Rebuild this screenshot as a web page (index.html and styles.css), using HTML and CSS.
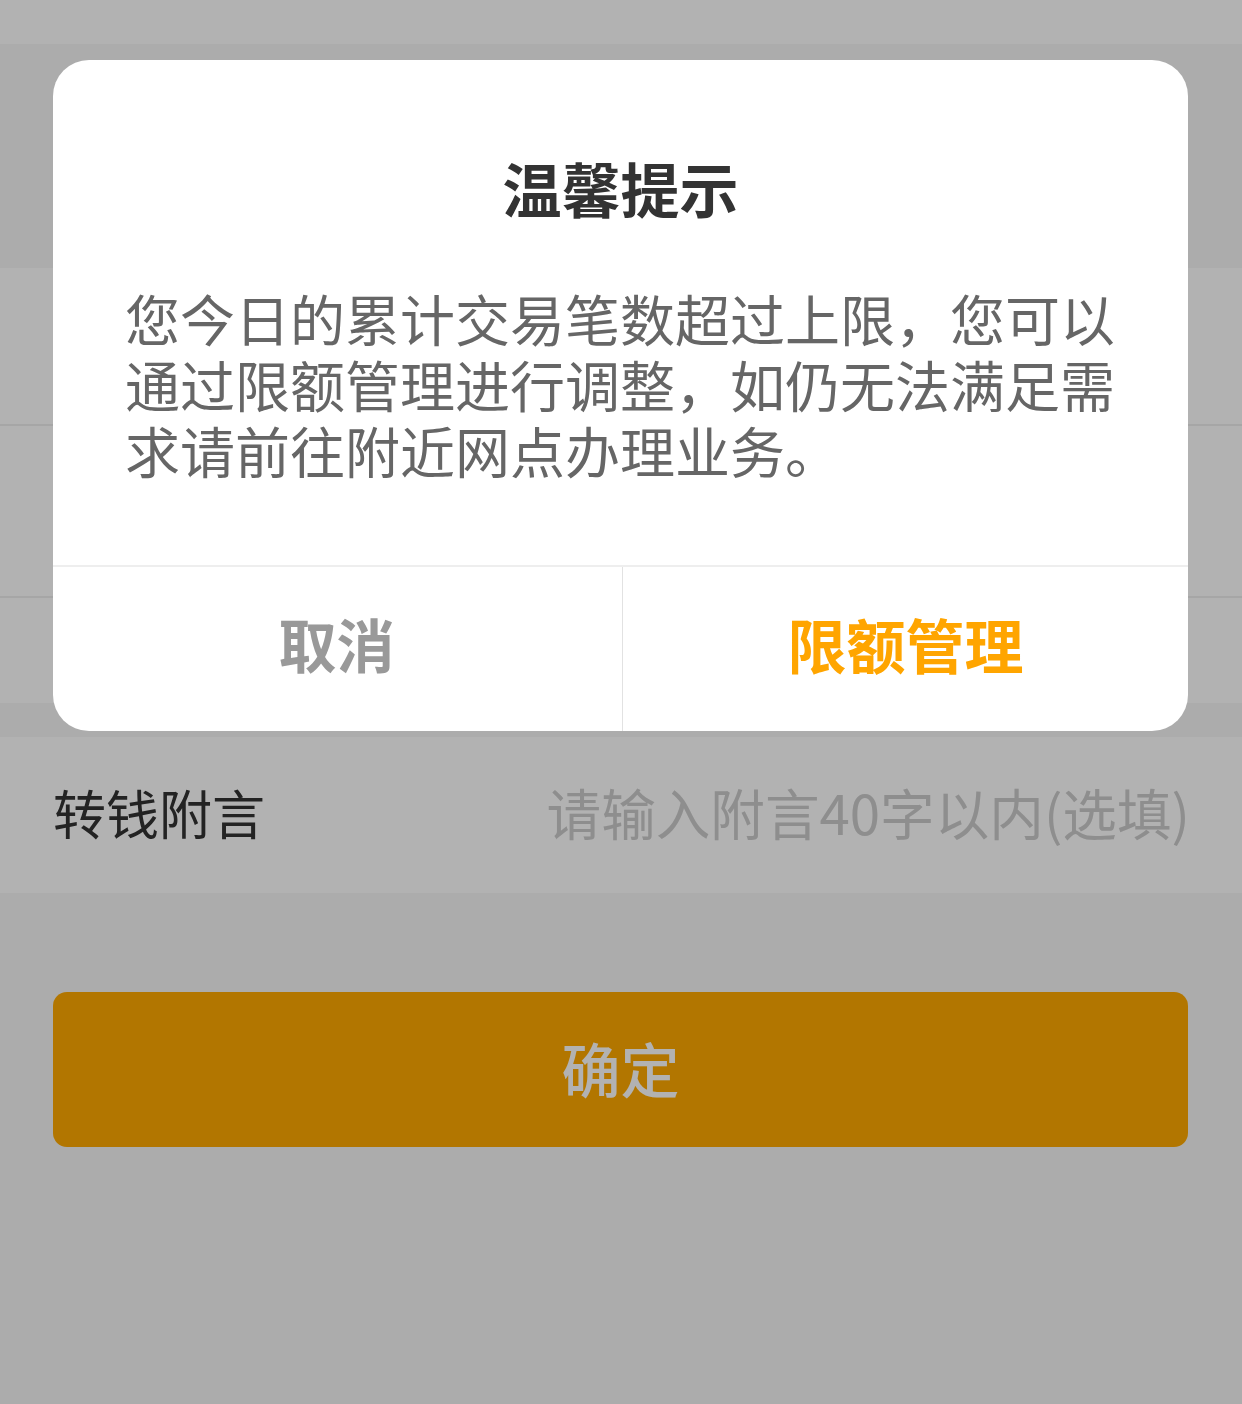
FILE: index.html
```html
<!DOCTYPE html>
<html lang="zh-CN">
<head>
<meta charset="utf-8">
<title>转账</title>
<link rel="stylesheet" href="styles.css">
</head>
<body>
<div class="page">
  <div class="topbar"></div>
  <div class="gap gap-top"></div>
  <div class="group">
    <div class="row row-a"></div>
    <div class="row row-b"></div>
    <div class="row row-c"></div>
  </div>
  <div class="gap gap-mid"></div>
  <div class="group">
    <div class="row row-note">
      <span class="label">转钱附言</span>
      <span class="placeholder">请输入附言40字以内(选填)</span>
    </div>
  </div>
  <div class="actions">
    <div class="confirm">确定</div>
  </div>
</div>

<div class="mask"></div>

<div class="dialog">
  <div class="dialog-body">
    <div class="dialog-title">温馨提示</div>
    <div class="dialog-text">您今日的累计交易笔数超过上限，您可以通过限额管理进行调整，如仍无法满足需求请前往附近网点办理业务。</div>
  </div>
  <div class="dialog-footer">
    <div class="btn btn-cancel">取消</div>
    <div class="btn btn-ok">限额管理</div>
  </div>
</div>
</body>
</html>
```

FILE: styles.css
```css
* {
  box-sizing: border-box;
}

html, body {
  margin: 0;
  padding: 0;
}

body {
  width: 1242px;
  height: 1404px;
  overflow: hidden;
  background: #f7f7f7;
  font-family: "Noto Sans CJK SC", "Noto Sans", sans-serif;
}

.page {
  display: flex;
  flex-direction: column;
  height: 1404px;
}

.topbar {
  height: 44px;
  background: #ffffff;
}

.gap-top {
  height: 224px;
}

.gap-mid {
  height: 34px;
}

.group {
  background: #ffffff;
}

.row {
  border-bottom: 2px solid #eeeeee;
}

.row-a {
  height: 158px;
}

.row-b {
  height: 172px;
}

.row-c {
  height: 105px;
  border-bottom: none;
}

.row-note {
  height: 156px;
  border-bottom: none;
  display: flex;
  align-items: center;
  justify-content: space-between;
  padding: 0 52px 6px 53px;
}

.label {
  font-size: 53px;
  color: #333333;
  line-height: 1;
}

.placeholder {
  font-size: 54.6px;
  color: #cccccc;
  line-height: 1;
}

.actions {
  padding: 99px 54px 0 53px;
}

.confirm {
  height: 155px;
  background: #ffaa00;
  border-radius: 14px;
  display: flex;
  align-items: center;
  justify-content: center;
  color: #ffffff;
  font-size: 59px;
  font-weight: 500;
  padding-bottom: 4px;
}

.mask {
  position: fixed;
  inset: 0;
  background: rgba(0, 0, 0, 0.3);
  z-index: 1;
}

.dialog {
  position: absolute;
  top: 60px;
  left: 53px;
  width: 1135px;
  height: 671px;
  background: #ffffff;
  border-radius: 36px;
  z-index: 2;
  display: flex;
  flex-direction: column;
  overflow: hidden;
}

.dialog-body {
  padding: 98px 72px 0 72px;
  height: 505px;
}

.dialog-title {
  text-align: center;
  font-size: 59px;
  font-weight: 700;
  color: #333333;
  line-height: 60px;
}

.dialog-text {
  margin-top: 66px;
  font-size: 55px;
  line-height: 66px;
  color: #666666;
}

.dialog-footer {
  flex: 1;
  display: flex;
  border-top: 2px solid #eeeeee;
}

.btn {
  display: flex;
  align-items: center;
  justify-content: center;
  font-weight: 700;
  line-height: 1;
  padding-bottom: 12px;
}

.btn-cancel {
  width: 570px;
  border-right: 1px solid #e2e2e2;
  font-size: 58px;
  color: #999999;
  padding-right: 2px;
}

.btn-ok {
  flex: 1;
  font-size: 59px;
  color: #ffa500;
}
```
